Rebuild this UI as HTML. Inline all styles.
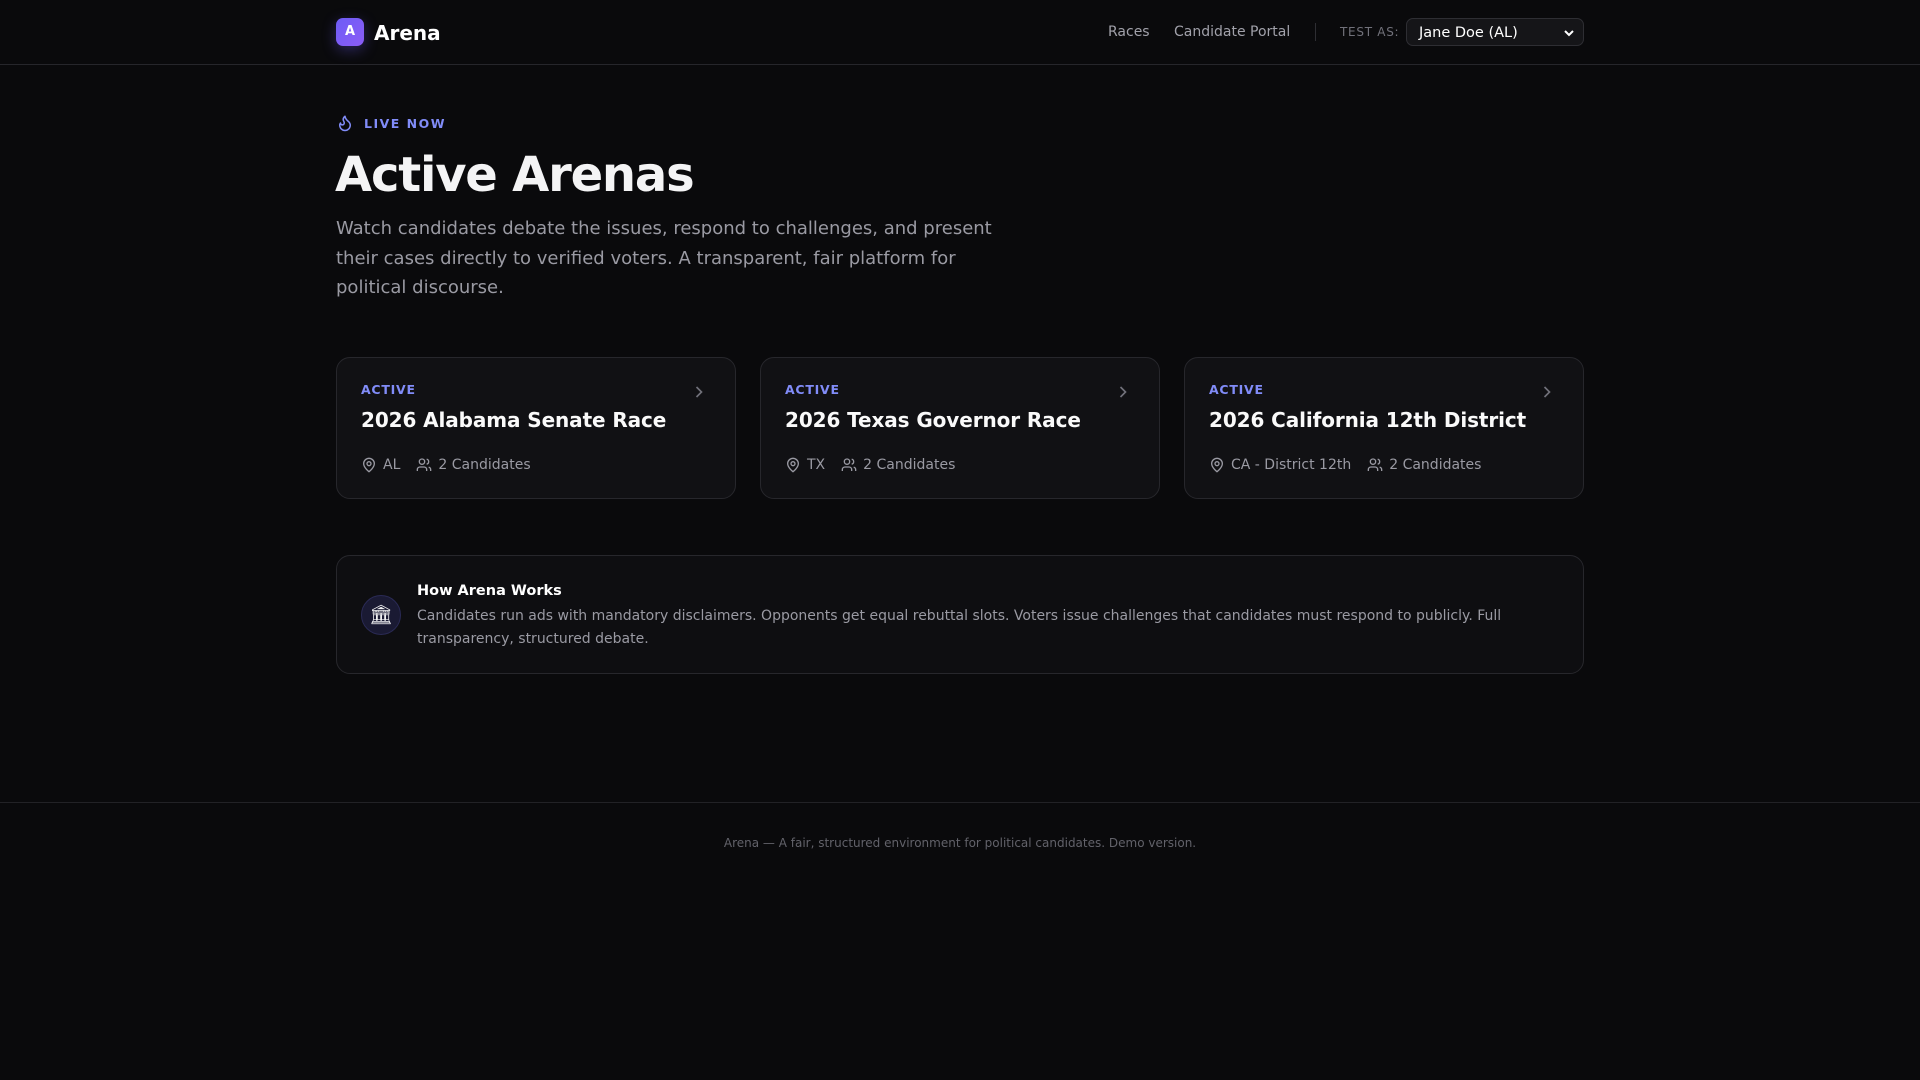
<!DOCTYPE html>
<html><head><meta charset="utf-8"><style>
*{box-sizing:border-box;margin:0;padding:0}
body{width:1920px;height:1080px;background:#0a0a0c;font-family:"DejaVu Sans","Liberation Sans",sans-serif;color:#f2f2f4;position:relative;overflow:hidden}
.hdr{position:absolute;left:0;top:0;width:1920px;height:65px;border-bottom:1px solid #26262b}
.logo{position:absolute;left:336px;top:18px;width:28px;height:28px;border-radius:7px;background:linear-gradient(135deg,#6d5cf6,#8b5cf6);box-shadow:0 4px 14px rgba(109,92,246,.35);color:#fff;font-size:13px;font-weight:bold;text-align:center;line-height:28px}
.brand{position:absolute;left:374px;top:19px;font-size:20px;font-weight:bold;line-height:28px;color:#fff}
.nav{position:absolute;top:22px;font-size:14px;color:#a1a1aa;line-height:20px}
.sep{position:absolute;left:1315px;top:23px;width:1px;height:18px;background:#2e2e33}
.testas{position:absolute;left:1340px;top:23px;font-size:12px;letter-spacing:.06em;color:#71717a;line-height:18px}
.sel{position:absolute;left:1406px;top:18px;width:178px;height:28px;border:1px solid #2e2e33;border-radius:7px;background:#151518;color:#fff;font-size:14.5px;line-height:28px;padding-left:12px}
.sel svg{position:absolute;right:8px;top:9px}
.live{position:absolute;left:336px;top:113px;display:flex;align-items:center;gap:10px;color:#818cf8;font-size:12.5px;font-weight:bold;letter-spacing:.12em}
h1{position:absolute;left:335px;top:145px;font-size:48px;letter-spacing:-.025em;font-weight:bold;line-height:60px;color:#f4f4f5}
.lead{position:absolute;left:336px;top:214px;width:680px;font-size:18px;line-height:29.5px;color:#9a9aa3}
.card{position:absolute;top:357px;width:400px;height:142px;border:1px solid #27272c;border-radius:14px;background:#111114;padding:24px}
.card .st{font-size:12.5px;font-weight:bold;letter-spacing:.06em;color:#818cf8;line-height:16px}
.card .t{font-size:20px;font-weight:bold;color:#fafafa;line-height:28px;margin-top:8px;letter-spacing:-.005em}
.card .m{margin-top:21px;display:flex;align-items:center;font-size:14px;color:#9a9aa3;line-height:20px}
.card .m svg{margin-right:6px}
.card .chev{position:absolute;right:26px;top:24px}
.how{position:absolute;left:336px;top:555px;width:1248px;height:119px;border:1px solid #27272c;border-radius:14px;background:#0e0e11}
.ic{position:absolute;left:24px;top:39px;width:40px;height:40px;border-radius:50%;background:#1a1a33;border:1px solid #2a2a55;text-align:center;line-height:38px;font-size:19px}
.how h3{position:absolute;left:80px;top:25px;font-size:14.5px;font-weight:bold;color:#fff;line-height:20px}
.how p{position:absolute;left:80px;top:49px;width:1120px;font-size:14px;line-height:23px;color:#9a9aa3}
.ft{position:absolute;left:0;top:802px;width:1920px;border-top:1px solid #222226;text-align:center;padding-top:33px;font-size:12px;color:#62626a}
</style></head><body>
<div class="hdr">
<div class="logo">A</div><div class="brand">Arena</div>
<div class="nav" style="left:1108px">Races</div>
<div class="nav" style="left:1174px">Candidate Portal</div>
<div class="sep"></div>
<div class="testas">TEST AS:</div>
<div class="sel">Jane Doe (AL)<svg width="12" height="10" viewBox="0 0 12 10"><path d="M2 3l4 4 4-4" stroke="#fff" stroke-width="2" fill="none"/></svg></div>
</div>
<div class="live"><svg width="18" height="20" viewBox="0 0 24 24" fill="none" stroke="#818cf8" stroke-width="2" stroke-linecap="round" stroke-linejoin="round"><path d="M8.5 14.5A2.5 2.5 0 0 0 11 12c0-1.38-.5-2-1-3-1.07-2.14-.22-4.05 2-6 .5 2.5 2 4.9 4 6.5 2 1.6 3 3.5 3 5.5a7 7 0 1 1-14 0c0-1.150.43-2.290 1-3a2.5 2.5 0 0 0 2.5 2.5z"/></svg>LIVE NOW</div>
<h1>Active Arenas</h1>
<div class="lead">Watch candidates debate the issues, respond to challenges, and present their cases directly to verified voters. A transparent, fair platform for political discourse.</div>

<div class="card" style="left:336px"><div class="st">ACTIVE</div><div class="t">2026 Alabama Senate Race</div>
<div class="m"><svg width="16" height="16" viewBox="0 0 24 24" fill="none" stroke="#9a9aa3" stroke-width="2"><path d="M20 10c0 6-8 12-8 12s-8-6-8-12a8 8 0 0 1 16 0z"/><circle cx="12" cy="10" r="3"/></svg>AL<span style="width:16px"></span><svg width="16" height="16" viewBox="0 0 24 24" fill="none" stroke="#9a9aa3" stroke-width="2"><path d="M16 21v-2a4 4 0 0 0-4-4H6a4 4 0 0 0-4 4v2"/><circle cx="9" cy="7" r="4"/><path d="M22 21v-2a4 4 0 0 0-3-3.87M16 3.13a4 4 0 0 1 0 7.75"/></svg>2 Candidates</div>
<svg class="chev" width="20" height="20" viewBox="0 0 24 24" fill="none" stroke="#71717a" stroke-width="2"><path d="M9 18l6-6-6-6"/></svg></div>

<div class="card" style="left:760px"><div class="st">ACTIVE</div><div class="t">2026 Texas Governor Race</div>
<div class="m"><svg width="16" height="16" viewBox="0 0 24 24" fill="none" stroke="#9a9aa3" stroke-width="2"><path d="M20 10c0 6-8 12-8 12s-8-6-8-12a8 8 0 0 1 16 0z"/><circle cx="12" cy="10" r="3"/></svg>TX<span style="width:16px"></span><svg width="16" height="16" viewBox="0 0 24 24" fill="none" stroke="#9a9aa3" stroke-width="2"><path d="M16 21v-2a4 4 0 0 0-4-4H6a4 4 0 0 0-4 4v2"/><circle cx="9" cy="7" r="4"/><path d="M22 21v-2a4 4 0 0 0-3-3.87M16 3.13a4 4 0 0 1 0 7.75"/></svg>2 Candidates</div>
<svg class="chev" width="20" height="20" viewBox="0 0 24 24" fill="none" stroke="#71717a" stroke-width="2"><path d="M9 18l6-6-6-6"/></svg></div>

<div class="card" style="left:1184px"><div class="st">ACTIVE</div><div class="t">2026 California 12th District</div>
<div class="m"><svg width="16" height="16" viewBox="0 0 24 24" fill="none" stroke="#9a9aa3" stroke-width="2"><path d="M20 10c0 6-8 12-8 12s-8-6-8-12a8 8 0 0 1 16 0z"/><circle cx="12" cy="10" r="3"/></svg>CA - District 12th<span style="width:16px"></span><svg width="16" height="16" viewBox="0 0 24 24" fill="none" stroke="#9a9aa3" stroke-width="2"><path d="M16 21v-2a4 4 0 0 0-4-4H6a4 4 0 0 0-4 4v2"/><circle cx="9" cy="7" r="4"/><path d="M22 21v-2a4 4 0 0 0-3-3.87M16 3.13a4 4 0 0 1 0 7.75"/></svg>2 Candidates</div>
<svg class="chev" width="20" height="20" viewBox="0 0 24 24" fill="none" stroke="#71717a" stroke-width="2"><path d="M9 18l6-6-6-6"/></svg></div>

<div class="how"><div class="ic">🏛</div><h3>How Arena Works</h3><p>Candidates run ads with mandatory disclaimers. Opponents get equal rebuttal slots. Voters issue challenges that candidates must respond to publicly. Full transparency, structured debate.</p></div>

<div class="ft">Arena — A fair, structured environment for political candidates. Demo version.</div>
</body></html>
